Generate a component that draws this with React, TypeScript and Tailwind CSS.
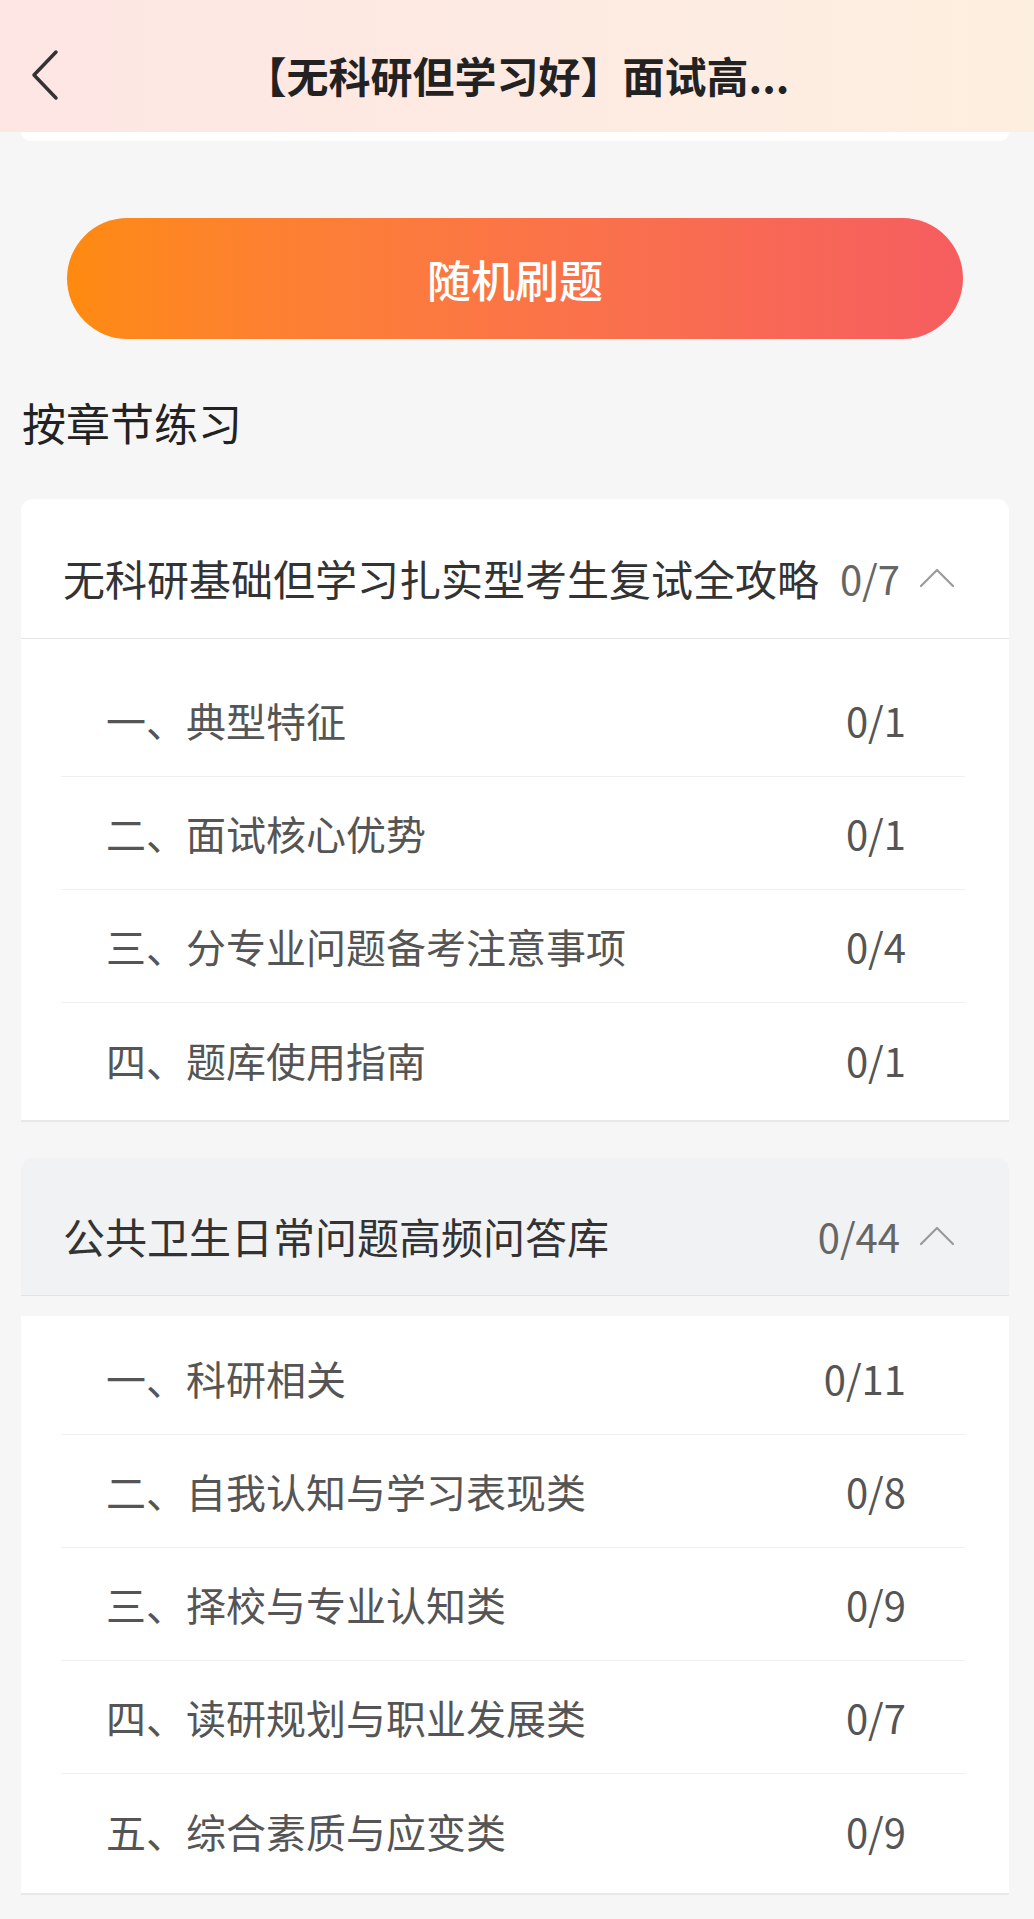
import React from "react";

type Item = {
    title: string;
    count: string;
};

type Chapter = {
    title: string;
    count: string;
    items: Item[];
    grayHead?: boolean;
};

const chapters: Chapter[] = [
    {
        title: "无科研基础但学习扎实型考生复试全攻略",
        count: "0/7",
        items: [
            { title: "一、典型特征", count: "0/1" },
            { title: "二、面试核心优势", count: "0/1" },
            { title: "三、分专业问题备考注意事项", count: "0/4" },
            { title: "四、题库使用指南", count: "0/1" },
        ],
    },
    {
        title: "公共卫生日常问题高频问答库",
        count: "0/44",
        grayHead: true,
        items: [
            { title: "一、科研相关", count: "0/11" },
            { title: "二、自我认知与学习表现类", count: "0/8" },
            { title: "三、择校与专业认知类", count: "0/9" },
            { title: "四、读研规划与职业发展类", count: "0/7" },
            { title: "五、综合素质与应变类", count: "0/9" },
        ],
    },
];

function ChevronUp() {
    return (
        <svg width="34" height="20" viewBox="0 0 34 20" fill="none">
            <polyline
                points="1,18 17,2 33,18"
                stroke="#9a9a9a"
                strokeWidth="2.2"
                strokeLinecap="round"
                strokeLinejoin="round"
            />
        </svg>
    );
}

function Rows({ items }: { items: Item[] }) {
    return (
        <>
            {items.map((item, index) => (
                <li
                    key={index}
                    className={
                        "h-[113px] flex items-center pl-[45px] pr-[59px] " +
                        (index < items.length - 1
                            ? "border-b border-[#f0f0f0]"
                            : "")
                    }
                >
                    <span className="flex-1 text-[40px] leading-none text-[#555]">
                        {item.title}
                    </span>
                    <span className="text-[40px] leading-none text-[#555]">
                        {item.count}
                    </span>
                </li>
            ))}
        </>
    );
}

function ChapterCard({ chapter }: { chapter: Chapter }) {
    if (chapter.grayHead) {
        return (
            <div className="ml-[21px] mr-[25px] mt-[36px]">
                <div className="h-[138px] pt-[19px] pl-[42px] pr-[55px] flex items-center bg-[#f1f2f4] rounded-t-[12px] border-b border-[#e2e3e5]">
                    <span className="flex-1 text-[42px] leading-none text-[#333]">
                        {chapter.title}
                    </span>
                    <span className="text-[40px] leading-none text-[#666] mr-[20px]">
                        {chapter.count}
                    </span>
                    <ChevronUp />
                </div>
                <ul className="mt-[20px] bg-white pl-[40px] pr-[44px] pt-[6px] pb-[6px] border-b-2 border-[#e8e8e8]">
                    <Rows items={chapter.items} />
                </ul>
            </div>
        );
    }

    return (
        <div className="ml-[21px] mr-[25px] bg-white rounded-t-[12px] border-b-2 border-[#e8e8e8]">
            <div className="h-[140px] pt-[18px] pl-[42px] pr-[55px] flex items-center border-b border-[#e6e6e6]">
                <span className="flex-1 text-[42px] leading-none text-[#333]">
                    {chapter.title}
                </span>
                <span className="text-[40px] leading-none text-[#666] mr-[20px]">
                    {chapter.count}
                </span>
                <ChevronUp />
            </div>
            <ul className="pl-[40px] pr-[44px] pt-[25px] pb-[4px]">
                <Rows items={chapter.items} />
            </ul>
        </div>
    );
}

export default function App() {
    return (
        <div className="min-h-[1919px] bg-[#f6f6f6] font-['Noto_Sans_CJK_SC','Noto_Sans',sans-serif]">
            <header className="h-[132px] flex items-center px-[30px] pt-[18px] bg-gradient-to-r from-[#fde6e4] to-[#fdefe0]">
                <svg width="30" height="52" viewBox="0 0 30 52" fill="none">
                    <polyline
                        points="26,3 4,26 26,49"
                        stroke="#333"
                        strokeWidth="3.5"
                        strokeLinecap="round"
                        strokeLinejoin="round"
                    />
                </svg>
                <h1 className="flex-1 text-center text-[42px] font-bold leading-none text-[#222] pr-[30px]">
                    【无科研但学习好】面试高...
                </h1>
            </header>
            <div className="ml-[21px] mr-[25px] h-[9px] bg-white rounded-b-[12px]" />

            <div className="pl-[67px] pr-[71px] pt-[77px]">
                <button className="w-full h-[121px] rounded-full bg-gradient-to-r from-[#ff8a0d] to-[#f65d5f] text-white text-[44px] font-medium">
                    随机刷题
                </button>
            </div>

            <h2 className="px-[22px] pt-[61px] pb-[55px] text-[44px] leading-none text-[#222]">
                按章节练习
            </h2>

            {chapters.map((chapter, index) => (
                <ChapterCard key={index} chapter={chapter} />
            ))}
        </div>
    );
}
